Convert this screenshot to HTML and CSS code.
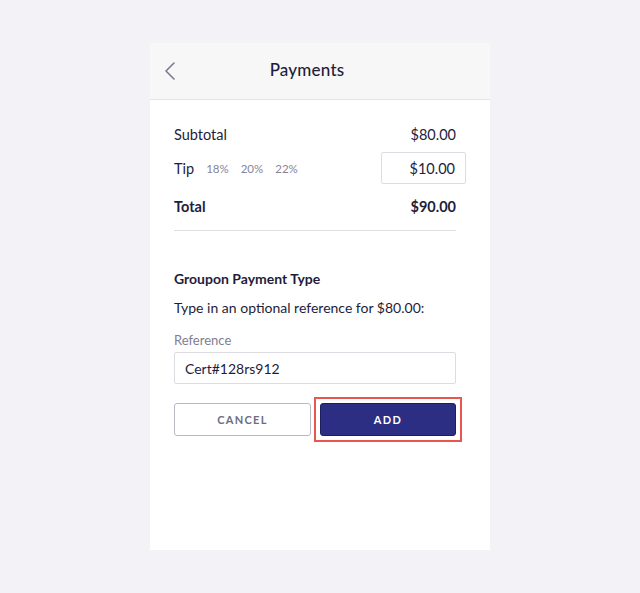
FILE: index.html
```html
<!DOCTYPE html>
<html>
<head>
<meta charset="utf-8">
<link rel="stylesheet" href="styles.css">
</head>
<body>
<div class="card">
  <div class="header">
    <svg class="back" width="12" height="20" viewBox="0 0 12 20"><path d="M10 2 L2 10 L10 18" fill="none" stroke="#7a7a8c" stroke-width="1.6" stroke-linecap="round" stroke-linejoin="round"/></svg>
    <div class="title">Payments</div>
  </div>
  <div class="content">
    <div class="row subtotal"><span>Subtotal</span><span>$80.00</span></div>
    <div class="row tip">
      <div class="tip-left"><span>Tip</span><span class="pct">18%</span><span class="pct">20%</span><span class="pct">22%</span></div>
      <div class="tip-box">$10.00</div>
    </div>
    <div class="row total"><span>Total</span><span>$90.00</span></div>
    <div class="divider"></div>
    <div class="section-title">Groupon Payment Type</div>
    <div class="desc">Type in an optional reference for $80.00:</div>
    <div class="label">Reference</div>
    <div class="input">Cert#128rs912</div>
    <div class="buttons">
      <div class="btn cancel">CANCEL</div>
      <div class="add-wrap"><div class="btn add">ADD</div></div>
    </div>
  </div>
</div>
</body>
</html>
```
FILE: styles.css
```css
* { box-sizing: border-box; }
html, body { margin: 0; padding: 0; }
body {
  background: #f3f2f7;
  font-family: Lato, "Open Sans", sans-serif;
  color: #1e1d3b;
  width: 640px;
  height: 593px;
}
.card {
  margin: 43px 0 0 150px;
  width: 340px;
  height: 507px;
  background: #ffffff;
}
.header {
  height: 57px;
  background: #f7f7f8;
  border-bottom: 1px solid #e4e4e8;
  display: flex;
  align-items: center;
  justify-content: center;
  position: relative;
}
.back { position: absolute; left: 14px; top: 18px; }
.title { font-size: 17px; font-weight: 500; margin-right: 26px; margin-top: -3px; letter-spacing: 0.2px; }
.content { padding: 24px 34px 0 24px; }
.row {
  display: flex;
  justify-content: space-between;
  align-items: center;
  font-size: 14.5px;
}
.subtotal { height: 20px; }
.tip { height: 32px; margin-top: 8px; margin-right: -10px; }
.tip-left { display: flex; align-items: center; }
.pct { font-size: 11.5px; color: #86859a; margin-left: 12px; }
.tip-left .pct:first-of-type { margin-left: 15px; }
.tip-box {
  width: 85px;
  height: 32px;
  border: 1px solid #dcdce2;
  border-radius: 2px;
  display: flex;
  align-items: center;
  justify-content: flex-end;
  padding-right: 10px;
  font-size: 14.5px;
}
.total { font-weight: 700; height: 20px; margin-top: 12px; }
.divider { height: 1px; background: #dedee3; margin-top: 14px; }
.section-title { font-size: 14px; font-weight: 700; margin-top: 38px; line-height: 20px; }
.desc { font-size: 14px; margin-top: 9px; line-height: 20px; }
.label { font-size: 13px; color: #7f7e92; margin-top: 13px; line-height: 18px; }
.input {
  margin-top: 3px;
  height: 32px;
  border: 1px solid #dcdce2;
  border-radius: 2px;
  display: flex;
  align-items: center;
  padding-left: 10px;
  font-size: 14px;
}
.buttons { display: flex; justify-content: space-between; margin-top: 19px; }
.btn {
  height: 33px;
  border-radius: 3px;
  display: flex;
  align-items: center;
  justify-content: center;
  font-size: 11px;
  font-weight: 700;
  letter-spacing: 1.3px;
}
.cancel {
  width: 137px;
  border: 1px solid #b9b8c4;
  color: #6e6d82;
}
.add-wrap {
  border: 2px solid #e8564f;
  padding: 4px;
  margin: -6px -6px 0 0;
}
.add {
  width: 136px;
  background: #2c2e84;
  border: 1px solid #1c1e5e;
  color: #ffffff;
}
```
